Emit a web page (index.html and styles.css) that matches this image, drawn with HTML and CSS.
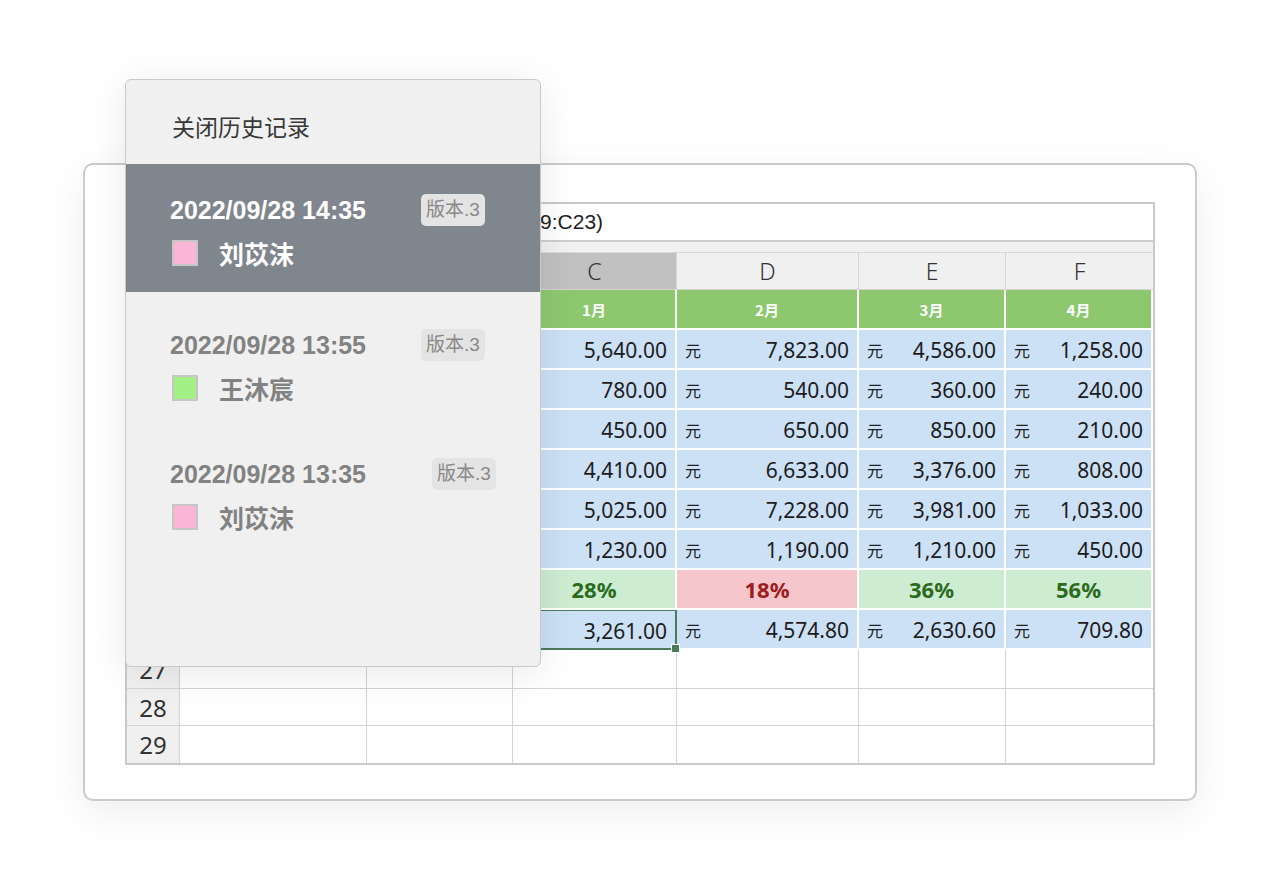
FILE: index.html
```html
<!DOCTYPE html>
<html lang="zh-CN">
<head>
<meta charset="utf-8">
<title>历史记录</title>
<link rel="stylesheet" href="styles.css">
</head>
<body>
<div class="stage">
  <div class="card">
    <div class="sheet">
      <div class="formula">
        <div class="namebox">C26</div>
        <div class="fx">fx</div>
        <div class="ftext">=AVERAGE(C19:C23)</div>
      </div>
      <div class="strip"></div>

      <div class="hd corner"></div>
      <div class="hd">A</div>
      <div class="hd">B</div>
      <div class="hd sel">C</div>
      <div class="hd">D</div>
      <div class="hd">E</div>
      <div class="hd last">F</div>

      <div class="rn">18</div>
      <div class="mon"></div>
      <div class="mon"></div>
      <div class="mon">1月</div>
      <div class="mon">2月</div>
      <div class="mon">3月</div>
      <div class="mon">4月</div>

      <div class="rn">19</div>
      <div class="val"></div>
      <div class="val"></div>
      <div class="val"><span class="cur">元</span><span>5,640.00</span></div>
      <div class="val"><span class="cur">元</span><span>7,823.00</span></div>
      <div class="val"><span class="cur">元</span><span>4,586.00</span></div>
      <div class="val"><span class="cur">元</span><span>1,258.00</span></div>

      <div class="rn">20</div>
      <div class="val"></div>
      <div class="val"></div>
      <div class="val"><span class="cur">元</span><span>780.00</span></div>
      <div class="val"><span class="cur">元</span><span>540.00</span></div>
      <div class="val"><span class="cur">元</span><span>360.00</span></div>
      <div class="val"><span class="cur">元</span><span>240.00</span></div>

      <div class="rn">21</div>
      <div class="val"></div>
      <div class="val"></div>
      <div class="val"><span class="cur">元</span><span>450.00</span></div>
      <div class="val"><span class="cur">元</span><span>650.00</span></div>
      <div class="val"><span class="cur">元</span><span>850.00</span></div>
      <div class="val"><span class="cur">元</span><span>210.00</span></div>

      <div class="rn">22</div>
      <div class="val"></div>
      <div class="val"></div>
      <div class="val"><span class="cur">元</span><span>4,410.00</span></div>
      <div class="val"><span class="cur">元</span><span>6,633.00</span></div>
      <div class="val"><span class="cur">元</span><span>3,376.00</span></div>
      <div class="val"><span class="cur">元</span><span>808.00</span></div>

      <div class="rn">23</div>
      <div class="val"></div>
      <div class="val"></div>
      <div class="val"><span class="cur">元</span><span>5,025.00</span></div>
      <div class="val"><span class="cur">元</span><span>7,228.00</span></div>
      <div class="val"><span class="cur">元</span><span>3,981.00</span></div>
      <div class="val"><span class="cur">元</span><span>1,033.00</span></div>

      <div class="rn">24</div>
      <div class="val"></div>
      <div class="val"></div>
      <div class="val"><span class="cur">元</span><span>1,230.00</span></div>
      <div class="val"><span class="cur">元</span><span>1,190.00</span></div>
      <div class="val"><span class="cur">元</span><span>1,210.00</span></div>
      <div class="val"><span class="cur">元</span><span>450.00</span></div>

      <div class="rn">25</div>
      <div class="pct good"></div>
      <div class="pct good"></div>
      <div class="pct good">28%</div>
      <div class="pct bad">18%</div>
      <div class="pct good">36%</div>
      <div class="pct good">56%</div>

      <div class="rn">26</div>
      <div class="val"></div>
      <div class="val"></div>
      <div class="val active"><span class="cur">元</span><span>3,261.00</span></div>
      <div class="val"><span class="cur">元</span><span>4,574.80</span></div>
      <div class="val"><span class="cur">元</span><span>2,630.60</span></div>
      <div class="val"><span class="cur">元</span><span>709.80</span></div>

      <div class="rn">27</div>
      <div class="em"></div><div class="em"></div><div class="em"></div><div class="em"></div><div class="em"></div><div class="em lastcol"></div>
      <div class="rn">28</div>
      <div class="em"></div><div class="em"></div><div class="em"></div><div class="em"></div><div class="em"></div><div class="em lastcol"></div>
      <div class="rn end">29</div>
      <div class="em end"></div><div class="em end"></div><div class="em end"></div><div class="em end"></div><div class="em end"></div><div class="em end lastcol"></div>
    </div>
  </div>

  <div class="panel">
    <div class="panel-head">关闭历史记录</div>
    <div class="item current">
      <div class="meta"><span class="date">2022/09/28 14:35</span><span class="badge">版本.3</span></div>
      <div class="who"><span class="swatch pink"></span><span class="name">刘苡沫</span></div>
    </div>
    <div class="item">
      <div class="meta"><span class="date">2022/09/28 13:55</span><span class="badge">版本.3</span></div>
      <div class="who"><span class="swatch green"></span><span class="name">王沐宸</span></div>
    </div>
    <div class="item">
      <div class="meta"><span class="date">2022/09/28 13:35</span><span class="badge wide">版本.3</span></div>
      <div class="who"><span class="swatch pink"></span><span class="name">刘苡沫</span></div>
    </div>
  </div>
</div>
</body>
</html>
```
FILE: styles.css
```css
* { box-sizing: border-box; }
html, body {
  margin: 0;
  padding: 0;
  background: #ffffff;
}
body {
  font-family: "Noto Sans", "Noto Sans CJK SC", sans-serif;
  color: #222;
}
.stage {
  position: relative;
  width: 1280px;
  height: 880px;
  overflow: hidden;
  padding-top: 163px;
  padding-left: 83px;
}

/* outer card */
.card {
  width: 1114px;
  height: 638px;
  background: #fff;
  border: 2px solid #cbcbcb;
  border-radius: 10px;
  box-shadow: 0 12px 40px rgba(0, 0, 0, 0.07);
  padding: 37px 0 0 40px;
}

/* spreadsheet */
.sheet {
  width: 1030px;
  border: 2px solid #c9c9c9;
  display: grid;
  grid-template-columns: 53px 187px 146px 164px 182px 147px 147px;
  grid-template-rows: 38px 11px 37px 40px repeat(6, 40px) 40px 40px 39px 37px 37px;
  background: #fff;
}
.formula {
  grid-column: 1 / -1;
  display: flex;
  align-items: center;
  border-bottom: 2px solid #cfcfcf;
  font-family: "Liberation Sans", "Noto Sans CJK SC", sans-serif;
  font-size: 21px;
  color: #1e1e1e;
}
.namebox {
  width: 229px;
  height: 100%;
  display: flex;
  align-items: center;
  padding-left: 12px;
  border-right: 1px solid #d6d6d6;
}
.fx {
  width: 38px;
  text-align: center;
  font-style: italic;
  color: #777;
}
.strip {
  grid-column: 1 / -1;
  background: #f1f1f1;
  border-bottom: 1px solid #d9d9d9;
}
.hd {
  background: #f0f0f0;
  border-right: 1px solid #d5d5d5;
  border-bottom: 1px solid #d5d5d5;
  display: flex;
  align-items: center;
  justify-content: center;
  font-size: 23px;
  font-weight: 300;
  color: #333;
}
.hd.sel { background: #c1c1c1; }
.hd.last { border-right: 0; }

.rn {
  background: #f0f0f0;
  border-right: 1px solid #d3d3d3;
  border-bottom: 1px solid #d3d3d3;
  display: flex;
  align-items: center;
  justify-content: center;
  font-size: 24px;
  color: #333;
}
.rn.end, .em.end { border-bottom: 0; }

.mon {
  background: #8dc86f;
  border-right: 2px solid #fff;
  border-bottom: 2px solid #fff;
  color: #fff;
  font-family: "Noto Sans CJK SC", sans-serif;
  font-weight: 700;
  font-size: 15px;
  display: flex;
  align-items: center;
  justify-content: center;
}
.val {
  background: #cce0f6;
  border-right: 2px solid #fff;
  border-bottom: 2px solid #fff;
  display: flex;
  align-items: center;
  justify-content: space-between;
  padding: 2px 8px 0 8px;
  font-size: 21px;
  color: #1c1c1c;
}
.cur {
  font-family: "Noto Sans CJK SC", sans-serif;
  font-size: 16px;
  color: #222;
}
.pct {
  border-right: 2px solid #fff;
  border-bottom: 2px solid #fff;
  display: flex;
  align-items: center;
  justify-content: center;
  font-size: 22px;
  font-weight: 700;
}
.pct.good { background: #cdecd2; color: #2c6a1e; }
.pct.bad { background: #f5c7cd; color: #9d1c1c; }

.val.active {
  position: relative;
  border: 2px solid #4d7a5b;
  border-top-width: 1px;
}
.val.active::after {
  content: "";
  position: absolute;
  right: -5px;
  bottom: -5px;
  width: 7px;
  height: 7px;
  background: #4d7a5b;
  border: 1px solid #fff;
}
.em {
  border-right: 1px solid #d3d3d3;
  border-bottom: 1px solid #d3d3d3;
}
.em.lastcol { border-right: 0; }

/* history panel */
.panel {
  position: absolute;
  left: 125px;
  top: 79px;
  width: 416px;
  height: 588px;
  background: #f0f0f0;
  border: 1.5px solid #c9c9c9;
  border-radius: 6px;
  box-shadow: 0 6px 40px rgba(0, 0, 0, 0.09);
  overflow: hidden;
  font-family: "Liberation Sans", "Noto Sans CJK SC", sans-serif;
}
.panel-head {
  height: 84px;
  padding: 7px 0 0 46px;
  display: flex;
  align-items: center;
  font-family: "Noto Sans CJK SC", sans-serif;
  font-size: 23px;
  color: #383838;
}
.item {
  height: 129px;
  padding: 40px 0 0 44px;
  color: #828282;
}
.item.current {
  height: 128px;
  padding-top: 33px;
  background: #7f868d;
  color: #fff;
}
.meta {
  display: flex;
  align-items: center;
  height: 26px;
}
.date {
  font-size: 25px;
  font-weight: 700;
  width: 251px;
  line-height: 26px;
}
.badge {
  font-family: "Liberation Sans", "Noto Sans CJK SC", sans-serif;
  background: #e4e4e4;
  color: #888;
  font-size: 19px;
  border-radius: 5px;
  padding: 4px 5px;
  line-height: 24px;
}
.badge.wide { margin-left: 11px; }
.who {
  display: flex;
  align-items: center;
  margin-top: 13px;
  padding-left: 2px;
}
.swatch {
  width: 26px;
  height: 26px;
  border: 2px solid #c6c6c6;
  margin-right: 21px;
}
.swatch.pink { background: #fbb5d6; }
.swatch.green { background: #a2f086; }
.name {
  font-family: "Noto Sans CJK SC", sans-serif;
  font-size: 25px;
  font-weight: 700;
  line-height: 34px;
}
```
